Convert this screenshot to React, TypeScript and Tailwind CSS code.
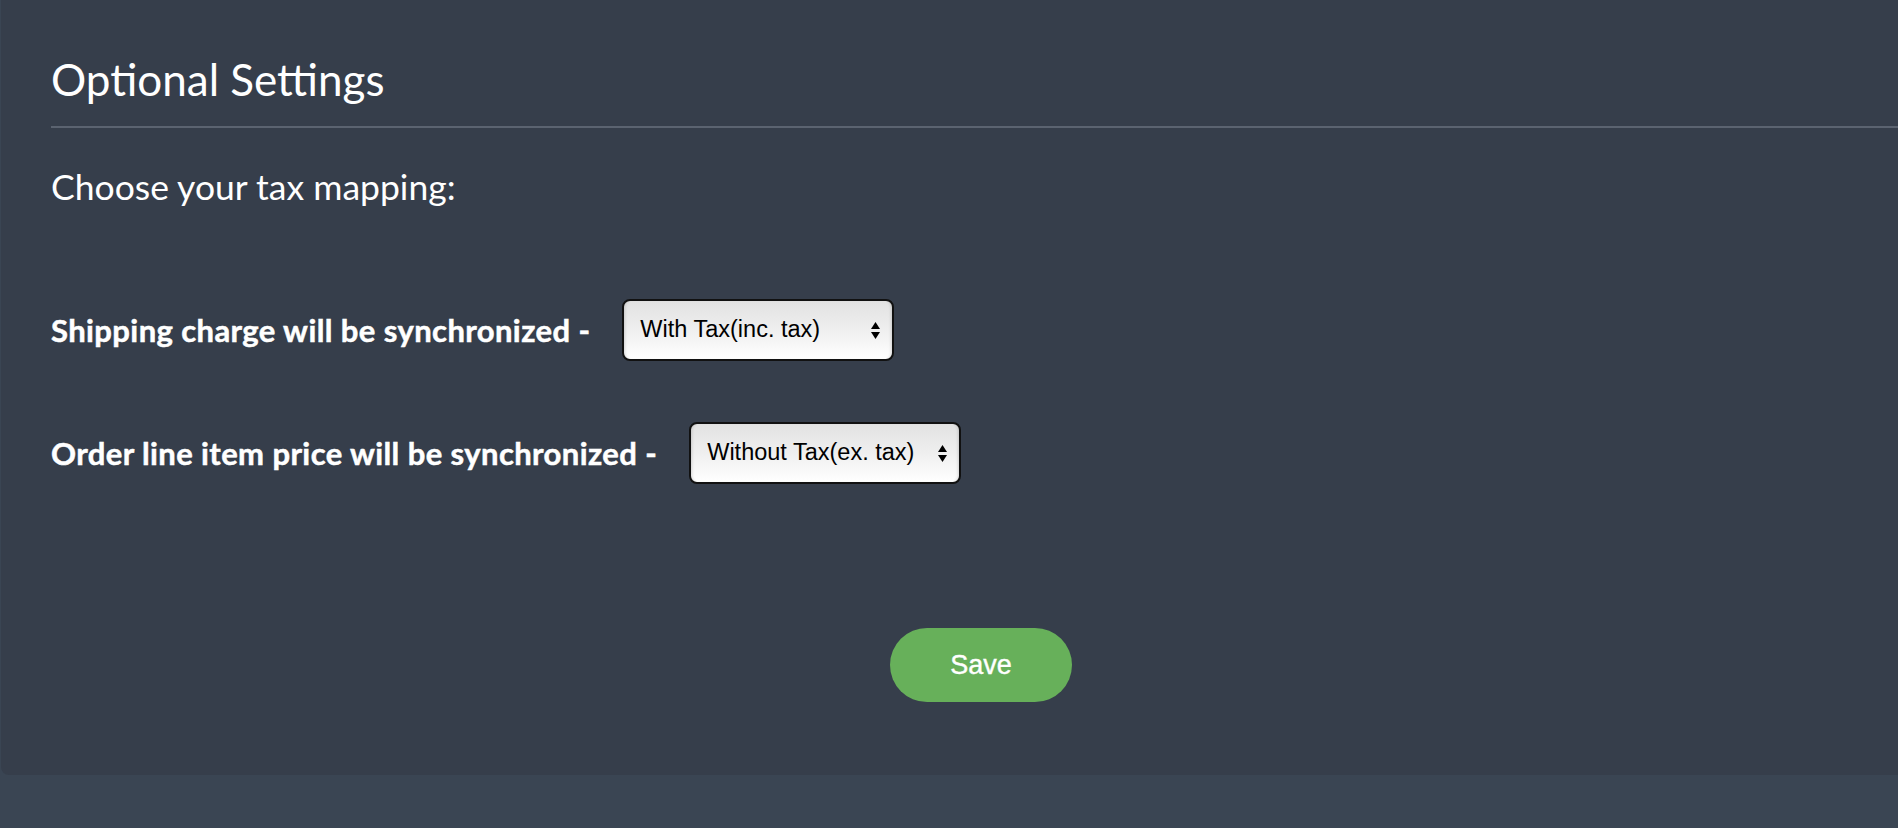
import React from "react";

const lato = { fontFamily: "Lato, 'Open Sans', sans-serif" };

function SelectBox({ value }: { value: string }) {
  return (
    <div
      role="button"
      className="flex h-[62px] w-[272px] items-center justify-between rounded-[8px] border-2 border-[#111] bg-linear-to-b from-[#e2e2e2] via-[#efefef] to-white pl-[16px] pr-[12px] text-[23.5px] text-black shadow-[inset_3px_0_3px_-2px_rgba(0,0,0,0.15),inset_-3px_0_3px_-2px_rgba(0,0,0,0.15)]"
      style={{ fontFamily: "'Liberation Sans', Arial, sans-serif" }}
    >
      <span>{value}</span>
      <svg width="9" height="17" viewBox="0 0 9 17" fill="#000">
        <polygon points="4.5,0 9,7 0,7" />
        <polygon points="0,10 9,10 4.5,17" />
      </svg>
    </div>
  );
}

export default function App() {
  return (
    <div className="min-h-screen w-full overflow-hidden bg-[#3a4553]" style={lato}>
      {/* Settings card */}
      <div className="ml-[1px] rounded-bl-[8px] bg-[#363e4b] pb-[73px] pl-[50px] pt-[56px]">
        <div className="border-b-2 border-[#5b6370] pb-[24px]">
          <h2 className="text-[44px] font-normal leading-[46px] text-white">Optional Settings</h2>
        </div>

        <p className="mt-[41px] text-[35.5px] leading-[35px] text-white">Choose your tax mapping:</p>

        <div className="mt-[95px] flex items-center gap-[32px]">
          <span className="text-[31px] font-bold tracking-[0.4px] text-white [-webkit-text-stroke:0.5px_white]">
            Shipping charge will be synchronized -
          </span>
          <SelectBox value="With Tax(inc. tax)" />
        </div>

        <div className="mt-[61px] flex items-center gap-[32px]">
          <span className="text-[31px] font-bold tracking-[0.4px] text-white [-webkit-text-stroke:0.5px_white]">
            Order line item price will be synchronized -
          </span>
          <SelectBox value="Without Tax(ex. tax)" />
        </div>

        <button
          className="ml-[839px] mt-[144px] block h-[74px] w-[182px] rounded-full bg-[#67b05a] text-[27px] text-white [-webkit-text-stroke:0.4px_white]"
          style={{ fontFamily: "'Liberation Sans', Arial, sans-serif" }}
        >
          Save
        </button>
      </div>
    </div>
  );
}
